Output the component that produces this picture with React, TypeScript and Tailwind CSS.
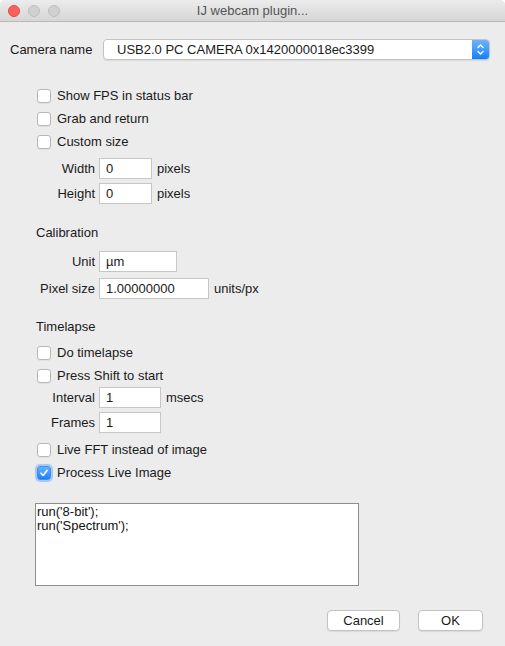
import React from 'react';

const font = { fontFamily: '"Liberation Sans", Arial, sans-serif' };

const Checkbox = ({ label, checked = false }: { label: string; checked?: boolean }) => (
    <div className="flex items-center h-[23px] pl-[27px]">
        {checked ? (
            <span className="w-[14px] h-[14px] rounded-[3px] bg-gradient-to-b from-[#69b1fa] to-[#0d81ff] border border-[#3f8ef0] shadow-[0_0_0_2px_rgba(90,160,250,0.45)] flex items-center justify-center">
                <svg width="10" height="10" viewBox="0 0 10 10">
                    <path d="M2 5.2 L4.1 7.5 L8 2.4" fill="none" stroke="white" strokeWidth="1.6" strokeLinecap="round" strokeLinejoin="round" />
                </svg>
            </span>
        ) : (
            <span className="w-[14px] h-[14px] rounded-[3px] bg-white border border-[#b8b8b8] shadow-[0_1px_0_rgba(0,0,0,0.05)]" />
        )}
        <span className="ml-[6px] text-[13px] text-[#1a1a1a]">{label}</span>
    </div>
);

const Field = ({ label, value, width, unit }: { label: string; value: string; width: string; unit?: string }) => (
    <div className="flex items-center h-[21px]">
        <span className="w-[89px] text-right text-[13px] text-[#1a1a1a] pr-[4px]">{label}</span>
        <div className={`${width} h-[21px] bg-white border border-[#c6c6c6] flex items-center pl-[6px] text-[13px] text-[#1a1a1a]`}>{value}</div>
        {unit && <span className="ml-[5px] text-[13px] text-[#1a1a1a]">{unit}</span>}
    </div>
);

export default function App() {
    return (
        <div style={font} className="w-[505px] h-[646px] bg-white">
            <div className="w-[505px] h-[646px] bg-[#ececec] rounded-t-[5px] overflow-hidden flex flex-col">
                {/* title bar */}
                <div className="relative h-[22px] bg-gradient-to-b from-[#ececec] to-[#d6d6d6] border-b border-[#b9b9b9] flex items-center justify-center">
                    <div className="absolute left-[8px] top-[5px] flex gap-[8px]">
                        <span className="w-[12px] h-[12px] rounded-full bg-[#fc605c] border border-[#de4a46]" />
                        <span className="w-[12px] h-[12px] rounded-full bg-[#d0d0d0] border border-[#bdbdbd]" />
                        <span className="w-[12px] h-[12px] rounded-full bg-[#d0d0d0] border border-[#bdbdbd]" />
                    </div>
                    <span className="text-[13px] text-[#555]">IJ webcam plugin...</span>
                </div>

                <div className="px-[10px]">
                    {/* camera row */}
                    <div className="flex items-center mt-[17px] h-[21px]">
                        <span className="w-[93px] text-[13px] text-[#1a1a1a]">Camera name</span>
                        <div className="w-[387px] h-[21px] bg-white rounded-[4px] border border-[#c3c3c3] shadow-[0_1px_1px_rgba(0,0,0,0.08)] flex items-center overflow-hidden">
                            <span className="flex-1 pl-[13px] text-[13px] text-[#1a1a1a]">USB2.0 PC CAMERA 0x1420000018ec3399</span>
                            <div className="w-[17px] h-full bg-gradient-to-b from-[#6cb3fa] to-[#0a7ffd] flex items-center justify-center">
                                <svg width="9" height="13" viewBox="0 0 9 13">
                                    <path d="M2 4.5 L4.5 2 L7 4.5 M2 8.5 L4.5 11 L7 8.5" fill="none" stroke="white" strokeWidth="1.4" strokeLinecap="round" strokeLinejoin="round" />
                                </svg>
                            </div>
                        </div>
                    </div>

                    {/* options */}
                    <div className="mt-[24px]">
                        <Checkbox label="Show FPS in status bar" />
                        <Checkbox label="Grab and return" />
                        <Checkbox label="Custom size" />
                    </div>
                    <div className="mt-[5px] flex flex-col gap-[4px]">
                        <Field label="Width" value="0" width="w-[53px]" unit="pixels" />
                        <Field label="Height" value="0" width="w-[53px]" unit="pixels" />
                    </div>

                    {/* calibration */}
                    <div className="mt-[21px] pl-[26px] h-[16px] flex items-center text-[13px] text-[#1a1a1a]">Calibration</div>
                    <div className="mt-[10px] flex flex-col gap-[6px]">
                        <Field label="Unit" value="µm" width="w-[78px]" />
                        <Field label="Pixel size" value="1.00000000" width="w-[110px]" unit="units/px" />
                    </div>

                    {/* timelapse */}
                    <div className="mt-[20px] pl-[26px] h-[16px] flex items-center text-[13px] text-[#1a1a1a]">Timelapse</div>
                    <div className="mt-[6px]">
                        <Checkbox label="Do timelapse" />
                        <Checkbox label="Press Shift to start" />
                    </div>
                    <div className="flex flex-col gap-[4px]">
                        <Field label="Interval" value="1" width="w-[62px]" unit="msecs" />
                        <Field label="Frames" value="1" width="w-[62px]" />
                    </div>
                    <div className="mt-[5px]">
                        <Checkbox label="Live FFT instead of image" />
                        <Checkbox label="Process Live Image" checked />
                    </div>

                    {/* macro */}
                    <div className="mt-[19px] ml-[25px] w-[324px] h-[83px] bg-white border border-[#8e8e8e] px-[1px] pt-[1px] text-[13px] leading-[14px] text-[#111]">
                        <div>run('8-bit');</div>
                        <div>run('Spectrum');</div>
                    </div>

                    {/* buttons */}
                    <div className="mt-[24px] flex justify-end gap-[18px] pr-[12px]">
                        <button className="w-[73px] h-[21px] bg-white rounded-[4px] border border-[#c2c2c2] shadow-[0_1px_1px_rgba(0,0,0,0.08)] text-[13px] text-[#1a1a1a]">Cancel</button>
                        <button className="w-[65px] h-[21px] bg-white rounded-[4px] border border-[#c2c2c2] shadow-[0_1px_1px_rgba(0,0,0,0.08)] text-[13px] text-[#1a1a1a]">OK</button>
                    </div>
                </div>
            </div>
        </div>
    );
}
